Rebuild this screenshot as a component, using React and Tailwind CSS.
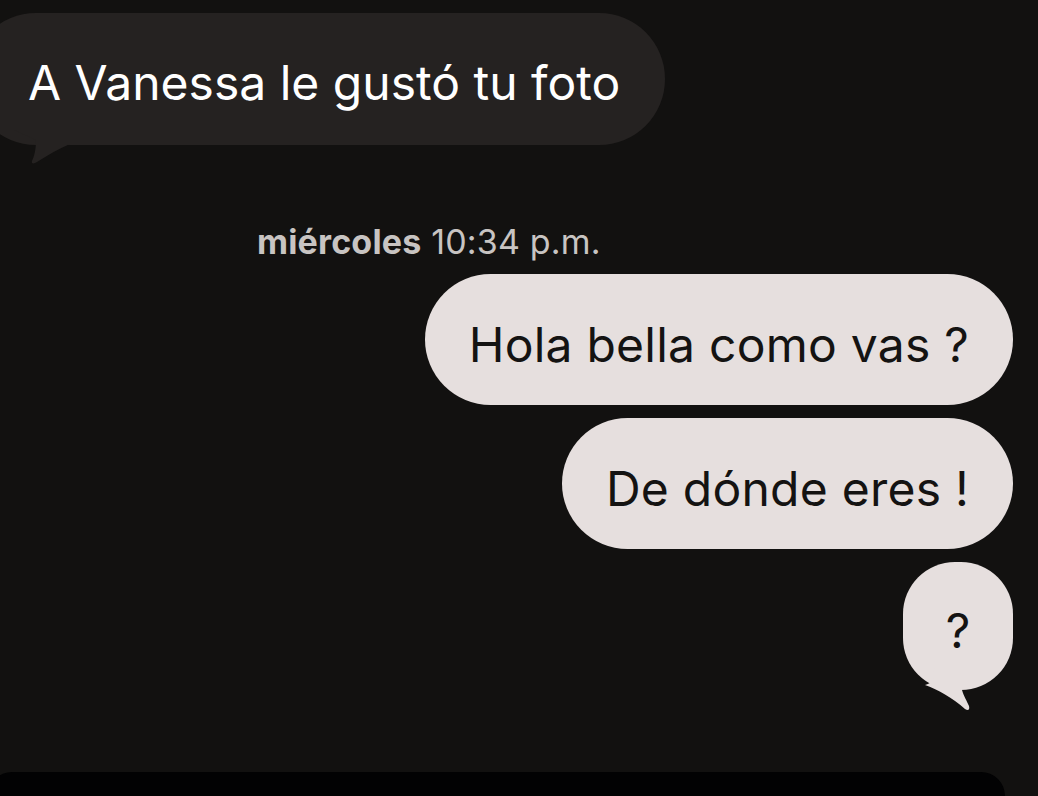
const font = { fontFamily: "Inter, 'Noto Sans', sans-serif" };

const Sent = ({ children }) => (
    <div className="flex justify-end pr-[25px]">
        <div className="h-[131px] flex items-center justify-center rounded-full bg-[#e6dfde] text-[#141312] text-[48px] px-[44px] pt-[10px] tracking-[0.005em]">
            {children}
        </div>
    </div>
);

export default function App() {
    return (
        <div className="w-[1038px] h-[796px] overflow-hidden bg-[#121110] flex flex-col" style={font}>
            {/* received */}
            <div className="pt-[13px]">
                <div className="relative ml-[-30px] w-[695px] h-[132px] rounded-full bg-[#252221] flex items-center pl-[58px] pt-[8px] text-white text-[48px]">
                    A Vanessa le gustó tu foto
                    <svg className="absolute left-[58px] top-[117px] overflow-visible" width="50" height="40" viewBox="0 0 50 40">
                        <path d="M-14 0 L 8 10 C 8 20, 6 27, 4 31 C 3 34, 6 34, 9 32 C 20 25, 30 19, 42 14 L 42 0 Z" fill="#252221" />
                    </svg>
                </div>
            </div>

            <div className="mt-[80px] pl-[257px] text-[34px] text-[#c8c4c2] leading-none tracking-[0.005em]">
                <span className="font-bold">miércoles</span> 10:34 p.m.
            </div>

            <div className="mt-[15px] flex flex-col gap-[13px]">
                <Sent>Hola bella como vas ?</Sent>
                <Sent>De dónde eres !</Sent>
                <div className="flex justify-end pr-[25px]">
                    <div className="relative w-[110px] h-[128px] rounded-[52px] bg-[#e6dfde] text-[#141312] text-[48px] pt-[10px] flex items-center justify-center">
                        ?
                        <svg className="absolute left-[12px] top-[98px]" width="60" height="55" viewBox="0 0 60 55">
                            <path d="M20 0 L 18 20 C 16 23, 13 24, 10 25 C 22 29, 38 38, 50 49 C 53 51, 55 50, 54 46 C 52 41, 49 37, 47 30 L 47 0 Z" fill="#e6dfde" />
                        </svg>
                    </div>
                </div>
            </div>

            <div className="flex-1" />
            <div className="h-[24px] ml-[-12px] mr-[33px] rounded-t-[40px] bg-[#020203]" />
        </div>
    );
}
